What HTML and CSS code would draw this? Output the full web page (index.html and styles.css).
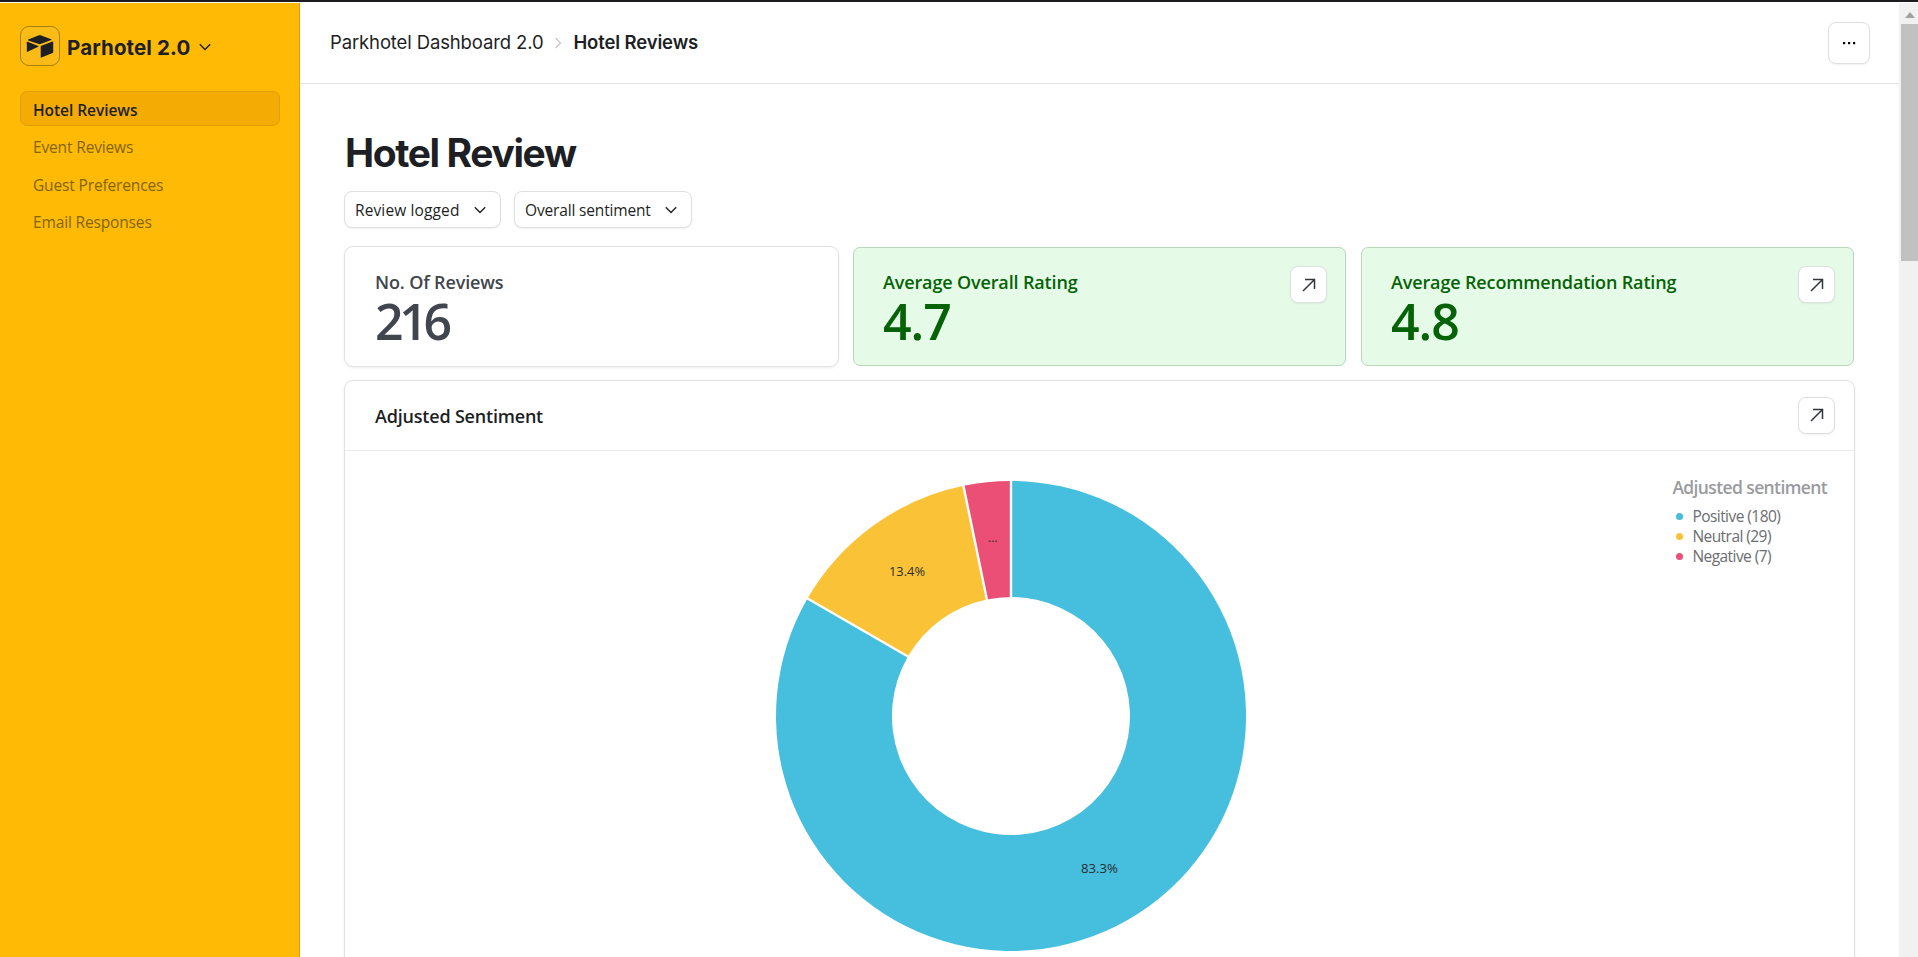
FILE: index.html
```html
<!DOCTYPE html>
<html lang="en">
<head>
    <meta charset="UTF-8">
    <title>Parkhotel Dashboard 2.0 - Hotel Reviews</title>
    <link rel="stylesheet" href="styles.css">
</head>
<body>
    <div class="app">
        <aside class="sidebar">
            <div class="brand">
                <span class="brand-logo">
                    <svg width="28" height="24" viewBox="0 0 28 24">
                        <path d="M2.2 5.6 13 1.3q.8-.3 1.600 0L25.200 5.300q.7.400 0 .7L14.500 10q-.8.300-1.600 0L2.200 6.400q-.7-.4 0-.8z"/>
                        <path d="M14.700 12.500q0-.6.600-.8L26.500 7.500q.7-.2.700.5v10.300q0 .6-.6.800l-11.200 4.300q-.7.200-.7-.5z"/>
                        <path d="M.8 8.300q0-.8.800-.5l10.600 4.100q.6.400 0 .8L1.600 17.800q-.8.300-.8-.5z"/>
                    </svg>
                </span>
                <span class="brand-name">Parhotel 2.0</span>
                <svg class="chevron" width="12" height="8" viewBox="0 0 12 8"><path d="M.8 1.200 6 6.400l5.200-5.200"/></svg>
            </div>
            <nav class="nav">
                <a class="nav-item active">Hotel Reviews</a>
                <a class="nav-item">Event Reviews</a>
                <a class="nav-item">Guest Preferences</a>
                <a class="nav-item">Email Responses</a>
            </nav>
        </aside>

        <main class="main">
            <header class="topbar">
                <div class="breadcrumb">
                    <span class="crumb">Parkhotel Dashboard 2.0</span>
                    <svg class="crumb-arrow" width="8" height="12" viewBox="0 0 8 12"><path d="M1.500 1l5 5-5 5"/></svg>
                    <span class="crumb current">Hotel Reviews</span>
                </div>
                <button class="icon-button more">
                    <svg width="14" height="4" viewBox="0 0 14 4"><rect x="1" y="1" width="2.200" height="2.200"/><rect x="6" y="1" width="2.200" height="2.200"/><rect x="11" y="1" width="2.200" height="2.200"/></svg>
                </button>
            </header>

            <div class="content">
                <h1>Hotel Review</h1>
                <div class="filters">
                    <button class="filter"><span>Review logged</span><svg class="chevron" width="12" height="8" viewBox="0 0 12 8"><path d="M.8 1.200 6 6.400l5.200-5.200"/></svg></button>
                    <button class="filter"><span>Overall sentiment</span><svg class="chevron" width="12" height="8" viewBox="0 0 12 8"><path d="M.8 1.200 6 6.400l5.200-5.200"/></svg></button>
                </div>

                <div class="stats">
                    <section class="stat plain">
                        <div>
                            <div class="stat-label">No. Of Reviews</div>
                            <div class="stat-value">216</div>
                        </div>
                    </section>
                    <section class="stat green">
                        <div>
                            <div class="stat-label">Average Overall Rating</div>
                            <div class="stat-value">4.7</div>
                        </div>
                        <button class="icon-button"><svg class="arrow" width="14" height="14" viewBox="0 0 14 14"><path d="M1 13 12.500 1.500M3 1.500h9.500V11"/></svg></button>
                    </section>
                    <section class="stat green">
                        <div>
                            <div class="stat-label">Average Recommendation Rating</div>
                            <div class="stat-value">4.8</div>
                        </div>
                        <button class="icon-button"><svg class="arrow" width="14" height="14" viewBox="0 0 14 14"><path d="M1 13 12.500 1.500M3 1.500h9.500V11"/></svg></button>
                    </section>
                </div>

                <section class="panel">
                    <div class="panel-header">
                        <h2>Adjusted Sentiment</h2>
                        <button class="icon-button"><svg class="arrow" width="14" height="14" viewBox="0 0 14 14"><path d="M1 13 12.500 1.500M3 1.500h9.500V11"/></svg></button>
                    </div>
                    <div class="panel-body">
                        <svg class="donut" width="474" height="474" viewBox="-237 -237 474 474">
                            <!-- radii 235 / 119 -->
                            <path fill="#46bedd" d="M0-235A235 235 0 1 1-203.500-117.500L-103.100-59.500A119 119 0 1 0 0-119z"/>
                            <path fill="#fac337" d="M-203.500-117.500A235 235 0 0 1-47.500-230.200L-24.100-116.500A119 119 0 0 0-103.100-59.500z"/>
                            <path fill="#ec4f76" d="M-47.500-230.200A235 235 0 0 1 0-235V-119A119 119 0 0 0-24.100-116.500z"/>
                            <path class="gap" d="M0-237V-117M-48-232.300-23.700-114.500M-205.200-118.500-101.300-58.500"/>
                            <text x="-122" y="-140" textLength="36" lengthAdjust="spacingAndGlyphs">13.4%</text>
                            <text x="70" y="157" textLength="37" lengthAdjust="spacingAndGlyphs">83.3%</text>
                            <text class="clipped" x="-23" y="-174">...</text>
                        </svg>
                        <div class="legend">
                            <div class="legend-title">Adjusted sentiment</div>
                            <ul>
                                <li class="positive">Positive (180)</li>
                                <li class="neutral">Neutral (29)</li>
                                <li class="negative">Negative (7)</li>
                            </ul>
                        </div>
                    </div>
                </section>
            </div>
        </main>

        <div class="scrollbar">
            <svg width="10" height="6" viewBox="0 0 10 6"><path d="M5 0l5 6H0z"/></svg>
            <div class="thumb"></div>
        </div>
    </div>
</body>
</html>
```

FILE: styles.css
```css
* {
    box-sizing: border-box;
}
body {
    margin: 0;
    height: 957px;
    overflow: hidden;
    background: #fff;
    color: #1d1f25;
    font-family: "Open Sans", "Noto Sans", sans-serif;
    border-top: 2px solid #1c1b1f;
}
button {
    font: inherit;
    color: inherit;
    padding: 0;
}
svg {
    display: block;
    flex: none;
}
.app {
    display: flex;
    height: 954px;
    margin-top: 1px;
}

/* Sidebar */
.sidebar {
    width: 300px;
    flex: none;
    padding: 23px 19px 0 20px;
    background: #ffba05;
    border-right: 1px solid #dda30b;
}
.brand {
    display: flex;
    align-items: center;
    height: 40px;
}
.brand-logo {
    display: flex;
    align-items: center;
    justify-content: center;
    width: 40px;
    height: 40px;
    border: 1px solid #a77f12;
    border-radius: 9px;
    background: #fbbb17;
    fill: #1d1f25;
}
.brand-name {
    margin: 3px 9px 0 7px;
    font: 700 20.5px/24px Inter, sans-serif;
    letter-spacing: 0.13px;
}
.chevron {
    fill: none;
    stroke: #1d1f25;
    stroke-width: 1.4;
}
.brand .chevron {
    margin-top: 2px;
}
.nav {
    display: flex;
    flex-direction: column;
    gap: 2.4px;
    margin-top: 25px;
}
.nav-item {
    height: 35px;
    padding-left: 12px;
    border: 1px solid transparent;
    border-radius: 7px;
    font-size: 15.5px;
    line-height: 36px;
    letter-spacing: -0.15px;
    color: #826411;
}
.nav-item.active {
    background: #f4ab03;
    border-color: #dfa007;
    color: #1d1f25;
    font-weight: 600;
    letter-spacing: -0.05px;
}

/* Header */
.main {
    flex: 1;
    min-width: 0;
}
.topbar {
    display: flex;
    align-items: center;
    justify-content: space-between;
    height: 81px;
    padding: 0 29px 0 30px;
    border-bottom: 1px solid #e3e4e5;
}
.breadcrumb {
    display: flex;
    align-items: center;
    margin-bottom: 2px;
    font: 400 18.5px/24px Inter, sans-serif;
    letter-spacing: -0.13px;
}
.crumb-arrow {
    margin: 1px 11px 0;
    fill: none;
    stroke: #c4c6c8;
    stroke-width: 1.3;
}
.current {
    font-weight: 600;
}
.icon-button {
    display: flex;
    align-items: center;
    justify-content: center;
    width: 37px;
    height: 37px;
    flex: none;
    background: #fff;
    border: 1px solid #dedfe0;
    border-radius: 8px;
    box-shadow: 0 1px 2px rgba(0, 0, 0, 0.06);
}
.icon-button.more {
    width: 42px;
    height: 42px;
}
.arrow {
    fill: none;
    stroke: #33363c;
    stroke-width: 1.5;
}

/* Content */
.content {
    padding: 44px 44px 0;
}
h1 {
    margin: 0 0 0 1px;
    font: 700 39px/50px Inter, sans-serif;
    letter-spacing: -1.4px;
}
.filters {
    display: flex;
    gap: 13px;
    margin-top: 13px;
}
.filter {
    display: flex;
    align-items: center;
    justify-content: space-between;
    height: 37px;
    padding: 0 14px 0 10px;
    background: #fff;
    border: 1px solid #dedfe0;
    border-radius: 8px;
    box-shadow: 0 1px 2px rgba(0, 0, 0, 0.06);
    font-size: 15.5px;
    white-space: nowrap;
}
.filter:first-child {
    width: 157px;
    letter-spacing: 0.12px;
}
.filter:last-child {
    width: 178px;
    letter-spacing: -0.16px;
}
.stats {
    display: grid;
    grid-template-columns: 495px 494px 493px;
    gap: 14px;
    align-items: center;
    margin-top: 18px;
    height: 121px;
}
.stat {
    display: flex;
    justify-content: space-between;
    height: 119px;
    padding: 18px 18px 0 29px;
    border: 1px solid #b9d6bc;
    border-radius: 7px;
}
.stat.plain {
    height: 121px;
    padding: 19px 30px 0;
    border-color: #e0e1e2;
    border-radius: 9px;
    box-shadow: 0 1px 3px rgba(0, 0, 0, 0.07);
    color: #41454d;
}
.stat.green {
    background: #e5fbe7;
    color: #066206;
}
.stat.green:nth-child(2) {
    margin-right: 1px;
}
.stat-label {
    margin-top: 3px;
    font-size: 18px;
    line-height: 26px;
    font-weight: 600;
    letter-spacing: -0.14px;
}
.stat-value {
    margin-top: 1px;
    font-size: 50px;
    line-height: 50px;
    font-weight: 600;
    letter-spacing: -1px;
}
.plain .stat-value {
    letter-spacing: -4.4px;
}
.panel {
    width: 1511px;
    height: 620px;
    margin-top: 13px;
    border: 1px solid #e0e1e2;
    border-radius: 9px;
    box-shadow: 0 1px 3px rgba(0, 0, 0, 0.07);
}
.panel-header {
    display: flex;
    align-items: center;
    justify-content: space-between;
    height: 70px;
    padding: 0 19px 1px 30px;
    border-bottom: 1px solid #ececed;
}
h2 {
    margin: 2px 0 0;
    font-size: 18px;
    line-height: 24px;
    font-weight: 600;
    letter-spacing: -0.2px;
}
.panel-body {
    display: grid;
    grid-template-columns: 429px 474px 1fr;
    padding-top: 28px;
}
.donut {
    grid-column: 2;
}
.donut text {
    font-size: 13.5px;
    fill: #2b2d30;
}
.donut .clipped {
    font-size: 12px;
}
.gap {
    stroke: #fff;
    stroke-width: 2.4;
}
.legend {
    margin: -5px 27px 0 auto;
    color: #6b6d70;
}
.legend-title {
    color: #999b9e;
    font-size: 17.5px;
    line-height: 26px;
    font-weight: 600;
    letter-spacing: -0.62px;
}
.legend ul {
    margin: 6px 0 0;
    padding: 0 0 0 4px;
    list-style: none;
}
.legend li {
    display: flex;
    align-items: center;
    gap: 9px;
    font-size: 15.5px;
    line-height: 20px;
    letter-spacing: -0.55px;
}
.legend li::before {
    content: "";
    width: 7px;
    height: 7px;
    border-radius: 50%;
}
.positive::before {
    background: #46bedd;
}
.neutral::before {
    background: #fac337;
}
.negative::before {
    background: #ec4f76;
}

/* Scrollbar */
.scrollbar {
    width: 19px;
    padding: 9px 0 0 2px;
    background: #f1f1f1;
}
.scrollbar svg {
    margin-left: 4px;
    fill: #a0a2a4;
}
.thumb {
    height: 237px;
    margin-top: 6px;
    background: #c1c1c1;
}
```
